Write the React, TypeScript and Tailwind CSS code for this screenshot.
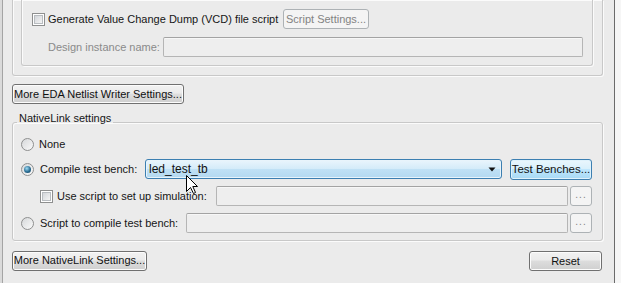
import React from "react";

const btn =
  "h-[20px] flex items-center justify-center whitespace-nowrap rounded-[3px] border border-[#707070] bg-[linear-gradient(#f2f2f2,#ebebeb_45%,#dddddd_50%,#cfcfcf)] shadow-[inset_0_0_0_1px_#fcfcfc] text-[#111]";
const btnOff =
  "h-[20px] flex items-center justify-center whitespace-nowrap rounded-[3px] border border-[#adb2b5] bg-[#f4f4f4] text-[#838383]";
const field =
  "h-[20px] rounded-[2px] border border-[#b5b5b5] border-t-[#a3a3a3] bg-[#eeeeee] shadow-[inset_0_1px_0_#f7f7f7]";
const etched =
  "border-[#c8c8c8] shadow-[inset_1px_1px_0_#fbfbfb,1px_1px_0_#fbfbfb]";

const Check = () => (
  <div className="w-[13px] h-[13px] shrink-0 border border-[#8e8f8f] bg-white p-[1px]">
    <div className="w-full h-full border border-[#b8bcc0] bg-[linear-gradient(135deg,#d3d6da,#f4f4f4)]" />
  </div>
);

const Radio = ({ on = false }: { on?: boolean }) => (
  <div className="w-[13px] h-[13px] shrink-0 rounded-full border border-[#8e8f8f] bg-[linear-gradient(135deg,#d6d8da,#fafafa)] flex items-center justify-center">
    {on && (
      <div className="w-[7px] h-[7px] rounded-full bg-[radial-gradient(circle_at_40%_35%,#9fdcf5,#2a6d93_55%,#0e3b57)]" />
    )}
  </div>
);

const Dots = () => (
  <div className={`${btnOff} w-[22px] h-[19px] text-[10px] tracking-[1px] pb-[3px]`}>...</div>
);

export default function App() {
  return (
    <div className="w-[621px] h-[283px] overflow-hidden relative flex bg-[#ebebeb] text-[11px] leading-[13px] text-[#161616] font-['Liberation_Sans',Arial,sans-serif]">
      <div className="w-[2px] bg-[#dadada]" />
      <div className="w-[1px] bg-[#a4a4a4]" />

      <div className="w-[608px] pl-[9px] pr-[8px] flex flex-col">
        {/* upper (cut) group boxes */}
        <div className={`border-x border-b rounded-b-[3px] pb-[9px] ${etched}`}>
          <div className={`ml-[8px] mr-[9px] border-x border-b rounded-b-[3px] pt-[9px] pb-[8px] flex flex-col gap-[8px] ${etched}`}>
            <div className="flex items-center h-[20px] pl-[10px]">
              <Check />
              <span className="ml-[3px] w-[235px]">Generate Value Change Dump (VCD) file script</span>
              <div className={`${btnOff} w-[86px]`}>Script Settings...</div>
            </div>
            <div className="flex items-center h-[20px] pl-[26px] pr-[9px]">
              <span className="w-[115px] text-[#8a8a8a]">Design instance name:</span>
              <div className={`${field} flex-1`} />
            </div>
          </div>
        </div>

        <div className={`${btn} mt-[8px] w-[172px]`}>More EDA Netlist Writer Settings...</div>

        <fieldset className={`mt-[8px] border rounded-[3px] min-w-0 ${etched}`}>
          <legend className="ml-[4px] px-[2px] leading-[13px] pb-[7px]">NativeLink settings</legend>
          <div className="pl-[8px] pr-[10px] pt-[2px] pb-[7px] flex flex-col">
            <div className="flex items-center h-[20px]">
              <Radio />
              <span className="ml-[5px]">None</span>
            </div>
            <div className="flex items-center h-[20px] mt-[5px]">
              <Radio on />
              <span className="ml-[6px] w-[105px]">Compile test bench:</span>
              <div className="flex-1 h-[20px] flex items-center rounded-[3px] border border-[#3c7fb1] bg-[linear-gradient(#eaf5fc,#d3ebf9_50%,#c0e1f5_50%,#b3d9f1)] shadow-[inset_0_0_0_1px_#e8f4fb] pl-[3px] pr-[5px] text-[12px]">
                <span className="flex-1 text-[#111]">led_test_tb</span>
                <svg width="8" height="5" viewBox="0 0 8 5">
                  <path d="M0.5 0.5 L7.5 0.5 L4 4.5 Z" fill="#111" />
                </svg>
              </div>
              <div className="ml-[8px] w-[82px] h-[21px] shrink-0 flex items-center justify-center whitespace-nowrap rounded-[3px] border border-[#3c7fb1] bg-[linear-gradient(#eaf6fd,#d9f0fc_45%,#bee6fd_50%,#a7d9f5)] shadow-[inset_0_0_0_1px_#dff2fc] text-[11.5px] text-[#111]">
                Test Benches...
              </div>
            </div>
            <div className="flex items-center h-[20px] mt-[7px] pl-[19px]">
              <Check />
              <span className="ml-[4px] w-[159px]">Use script to set up simulation:</span>
              <div className={`${field} flex-1 h-[19px]`} />
              <div className="ml-[2px]">
                <Dots />
              </div>
            </div>
            <div className="flex items-center h-[20px] mt-[7px]">
              <Radio />
              <span className="ml-[6px] w-[146px]">Script to compile test bench:</span>
              <div className={`${field} flex-1 h-[19px]`} />
              <div className="ml-[2px]">
                <Dots />
              </div>
            </div>
          </div>
        </fieldset>

        <div className="mt-[9px] flex items-center justify-between pr-[1px]">
          <div className={`${btn} w-[135px]`}>More NativeLink Settings...</div>
          <div className={`${btn} w-[73px] mt-[1px]`}>Reset</div>
        </div>
      </div>

      <div className="w-[3px]" />
      <div className="w-[1px] bg-[#6b6b6b]" />
      <div className="flex-1 bg-[#f6f6f6]" />

      {/* mouse pointer over the combo box */}
      <svg className="absolute left-[186px] top-[175px]" width="13" height="20" viewBox="0 0 13 20">
        <path
          d="M0.5 0.5 L0.5 16.5 L4.5 12.5 L7.5 18.5 L9.5 17.5 L6.8 11.5 L11.5 11.5 Z"
          fill="#fff"
          stroke="#000"
          strokeWidth="1"
          strokeLinejoin="round"
        />
      </svg>
    </div>
  );
}
